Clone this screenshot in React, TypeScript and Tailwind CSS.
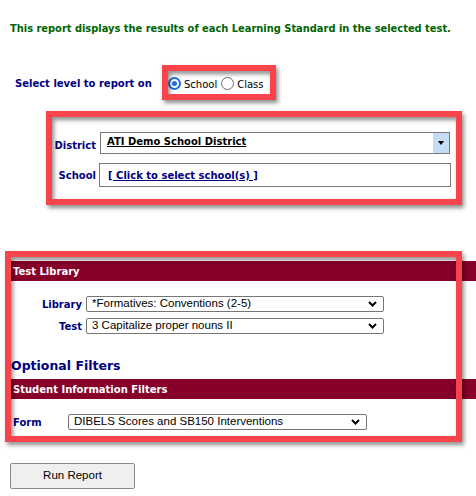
import React from "react";

function Chevron() {
  return (
    <svg width="9" height="6" viewBox="0 0 9 6" className="shrink-0">
      <path d="M1 1L4.5 4.5L8 1" fill="none" stroke="#000" strokeWidth="2" />
    </svg>
  );
}

function FakeSelect({ value, width }: { value: string; width: string }) {
  return (
    <div
      className={`${width} h-[16px] flex items-center justify-between border border-[#767676] rounded-[2px] bg-white pl-[5px] pr-[6px] font-['Liberation_Sans',Arial,sans-serif] text-[11.5px] text-black leading-none`}
    >
      <span className="whitespace-nowrap">{value}</span>
      <Chevron />
    </div>
  );
}

function Radio({ checked, label }: { checked?: boolean; label: string }) {
  return (
    <label className="flex items-center gap-[3px]">
      {checked ? (
        <span className="w-[13px] h-[13px] rounded-full border-2 border-[#1f6fdb] flex items-center justify-center">
          <span className="w-[5px] h-[5px] rounded-full bg-[#1f6fdb]" />
        </span>
      ) : (
        <span className="w-[13px] h-[13px] rounded-full border border-[#6d6d6d] bg-white" />
      )}
      <span className="pt-[3px] text-[10px] text-black font-normal">{label}</span>
    </label>
  );
}

export default function App() {
  return (
    <div className="relative w-[476px] h-[496px] overflow-hidden bg-white font-['DejaVu_Sans',Verdana,sans-serif]">
      {/* Intro */}
      <p className="pl-[10px] pt-[22px] text-[9.9px] leading-[13px] font-bold text-[#006400] whitespace-nowrap">
        This report displays the results of each Learning Standard in the selected test.
      </p>

      {/* Level */}
      <div className="mt-[36px] h-[24px] flex items-center pl-[15px]">
        <span className="w-[153px] shrink-0 text-[10px] leading-[13px] font-bold text-[#000080]">
          Select level to report on
        </span>
        <div className="flex items-center gap-[4px]">
          <Radio checked label="School" />
          <Radio label="Class" />
        </div>
      </div>

      {/* District / School */}
      <div className="mt-[37px] grid grid-cols-[96px_352px] gap-x-[4px] gap-y-[9px] items-center">
        <span className="pt-[4px] text-right text-[10px] leading-[13px] font-bold text-[#000080]">District</span>
        <div className="w-[350px] h-[22px] flex items-stretch border border-[#7a7a7a] bg-white">
          <span className="flex-1 pl-[6px] pt-[2px] text-[10px] leading-[13px] font-bold text-black underline">
            ATI Demo School District
          </span>
          <span className="w-[16px] bg-[#c5dcf7] flex items-center justify-center">
            <svg width="6" height="4" viewBox="0 0 6 4">
              <path d="M0 0H6L3 4Z" fill="#000" />
            </svg>
          </span>
        </div>
        <span className="text-right text-[10px] leading-[13px] font-bold text-[#000080]">School</span>
        <div className="-ml-[1px] w-[352px] h-[24px] flex items-center border border-[#7a7a7a] bg-white pl-[8px]">
          <span className="text-[10px] leading-[13px] font-bold text-[#000080] underline">
            [ Click to select school(s) ]
          </span>
        </div>
      </div>

      {/* Test Library */}
      <div className="mt-[74px] ml-[11px] h-[20px] flex items-center bg-[#870029] pl-[2px] text-[10px] font-bold text-white">
        Test Library
      </div>
      <div className="mt-[15px] grid grid-cols-[82px_298px] gap-x-[4px] gap-y-[6px] items-center">
        <span className="text-right text-[10px] leading-[13px] font-bold text-[#000080]">Library</span>
        <FakeSelect width="w-[298px]" value="*Formatives: Conventions (2-5)" />
        <span className="text-right text-[10px] leading-[13px] font-bold text-[#000080]">Test</span>
        <FakeSelect width="w-[298px]" value="3 Capitalize proper nouns II" />
      </div>

      {/* Optional filters */}
      <h2 className="mt-[24px] pl-[11px] text-[12.5px] leading-[16px] font-bold text-[#000080]">Optional Filters</h2>
      <div className="mt-[5px] ml-[11px] h-[20px] flex items-center bg-[#870029] pl-[2px] text-[10px] font-bold text-white">
        Student Information Filters
      </div>
      <div className="mt-[15px] flex items-center pl-[13px]">
        <span className="w-[55px] text-[10px] leading-[13px] font-bold text-[#000080]">Form</span>
        <FakeSelect width="w-[299px]" value="DIBELS Scores and SB150 Interventions" />
      </div>

      <button className="mt-[33px] ml-[10px] w-[125px] h-[26px] border border-[#8a8a8a] rounded-[2px] bg-[#efefef] font-['Liberation_Sans',Arial,sans-serif] text-[11.5px] text-black">
        Run Report
      </button>

      {/* Annotation boxes */}
      <div className="absolute left-[162px] top-[65px] w-[114px] h-[35px] border-[6px] border-[#f8444a] drop-shadow-[2px_3px_2px_rgba(0,0,0,0.45)]" />
      <div className="absolute left-[46px] top-[111px] w-[416px] h-[94px] border-[6px] border-[#f8444a] drop-shadow-[2px_3px_2px_rgba(0,0,0,0.45)]" />
      <div className="absolute left-[5px] top-[251px] w-[457px] h-[191px] border-[6px] border-[#f8444a] drop-shadow-[2px_3px_2px_rgba(0,0,0,0.45)]" />
    </div>
  );
}
